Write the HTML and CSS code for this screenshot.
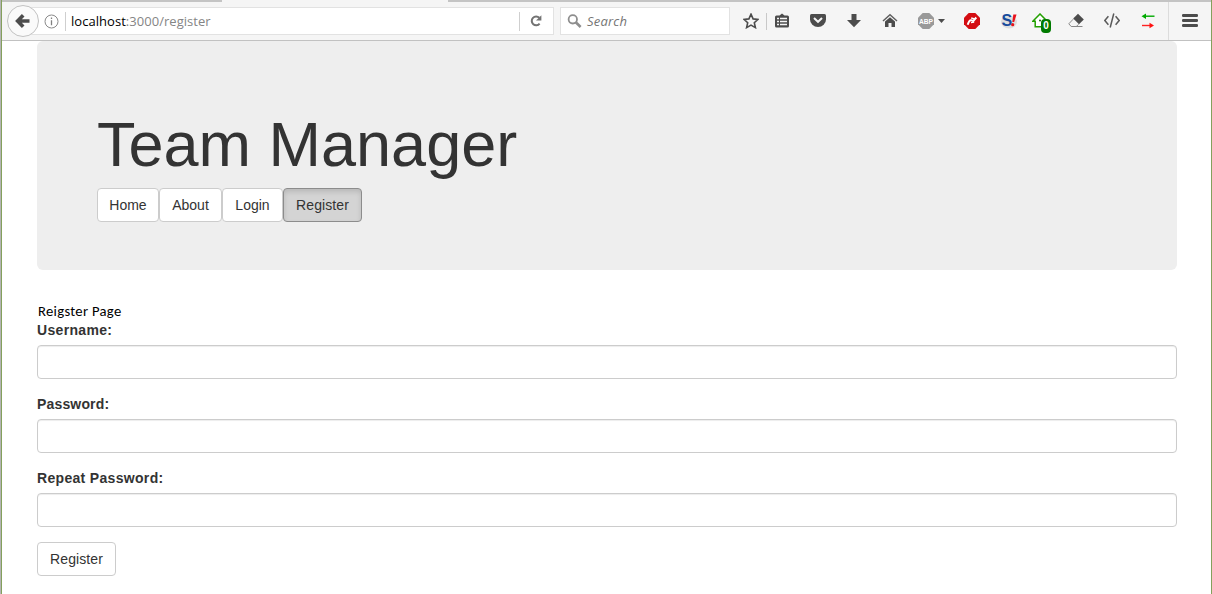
FILE: index.html
```html
<!DOCTYPE html>
<html lang="en">
<head>
<meta charset="utf-8">
<title>Team Manager</title>
<link rel="stylesheet" href="styles.css">
</head>
<body>
<div class="window">
  <div class="tabstrip"><span class="tab-active"></span></div>
  <header class="toolbar">
    <button class="back" aria-label="Back"><svg width="16" height="16" viewBox="0 0 16 16"><path d="M8.2 2.2 2.6 8 8.2 13.8M3.5 8H14.5" fill="none" stroke="#4c4c4c" stroke-width="3.6"/></svg></button>
    <div class="urlbar">
      <svg class="info" width="15" height="15" viewBox="0 0 15 15"><circle cx="7.5" cy="7.5" r="6.5" fill="none" stroke="#8a8a8a"/><path d="M7.5 3.5v1.6M7.5 6.3v5" stroke="#808080" stroke-width="1.3"/></svg>
      <span class="divider"></span>
      <span class="url"><span class="host">localhost</span>:3000/register</span>
      <span class="divider"></span>
      <svg class="reload" width="12" height="12" viewBox="0 0 12 12"><path d="M9.6 8.6A4.4 4.4 0 1 1 9.3 2.8" fill="none" stroke="#737373" stroke-width="2"/><path d="M11.4.2V5.6H6z" fill="#737373"/></svg>
    </div>
    <div class="searchbar">
      <svg width="15" height="15" viewBox="0 0 15 15"><circle cx="5.8" cy="5.3" r="4.2" fill="none" stroke="#8e8e8e" stroke-width="1.8"/><path d="M8.8 8.3 13.6 13" stroke="#8e8e8e" stroke-width="2.6"/></svg>
      <span class="search-label">Search</span>
    </div>
    <nav class="tools">
      <span class="tool"><svg viewBox="0 0 16 16"><path d="M8 1.2 10.1 5.9 15 6.4 11.3 9.7 12.4 14.6 8 12.1 3.6 14.6 4.7 9.7 1 6.4 5.9 5.9z" fill="none" stroke="#4c4c4c" stroke-width="1.6"/></svg></span>
      <span class="tool-divider"></span>
      <span class="tool"><svg viewBox="0 0 16 16"><path d="M2.5 2.5H5.5L8 .4 10.5 2.5H13.5Q15 2.5 15 4V13Q15 14.5 13.5 14.5H2.5Q1 14.5 1 13V4Q1 2.5 2.5 2.5Z" fill="#4c4c4c"/><path d="M3 5.5H5M6 5.5H13M3 8.5H5M6 8.5H13M3 11.5H5M6 11.5H13" stroke="#f5f5f5" stroke-width="1.6"/></svg></span>
      <span class="tool"><svg viewBox="0 0 16 16"><path d="M1.5 1H14.5Q16 1 16 2.5V6.5A8 7.5 0 0 1 0 6.5V2.5Q0 1 1.5 1Z" fill="#4c4c4c"/><path d="M4 5 8 8.8 12 5" fill="none" stroke="#f5f5f5" stroke-width="2"/></svg></span>
      <span class="tool"><svg viewBox="0 0 16 16"><path d="M5.5 1H10.5V7H15L8 14.3 1 7H5.5Z" fill="#4c4c4c"/></svg></span>
      <span class="tool"><svg viewBox="0 0 16 16"><path d="M1 8 8 1.8 15 8" fill="none" stroke="#606060" stroke-width="1.5"/><path d="M3 8.6 8 4.2 13 8.6V14H9.5V10H6.5V14H3Z" fill="#4c4c4c"/></svg></span>
      <span class="tool abp"><svg viewBox="0 0 16 16"><path d="M4.7 0H11.3L16 4.7V11.3L11.3 16H4.7L0 11.3V4.7Z" fill="#999"/><text x="8" y="11" class="abp-text" textLength="14" lengthAdjust="spacingAndGlyphs">ABP</text></svg><svg class="caret" viewBox="0 0 7 4"><path d="M0 0H7L3.5 4Z" fill="#4c4c4c"/></svg></span>
      <span class="tool flash"><svg viewBox="0 0 16 16"><path d="M4.7 0H11.3L16 4.7V11.3L11.3 16H4.7L0 11.3V4.7Z" fill="#d40d12"/><path d="M3.7 11.8C4.7 8.5 5.8 6.8 7.3 7.2L9.2 8 12.3 4.5" fill="none" stroke="#fff" stroke-width="2"/><path d="M7.2 5 10.6 5.9M7 9.6 10.2 9" fill="none" stroke="#fff" stroke-width="1.4"/></svg></span>
      <span class="tool s-tool"><svg viewBox="0 0 16 16"><ellipse cx="8" cy="9" rx="8" ry="6.5" fill="#dedede"/><text x="0.5" y="13.2" class="s-text">S</text><path d="M12.3 1.5H15.5L13.2 9H11.3Z" fill="#e8121b"/><circle cx="11.7" cy="11.7" r="1.6" fill="#e8121b"/></svg></span>
      <span class="tool"><svg viewBox="0 0 16 16"><path d="M.8 8.3 8 1 15.2 8.3H12.8V13.7H3.2V8.3Z" fill="#fff" stroke="#22a000" stroke-width="1.5"/><circle cx="8" cy="7.5" r="1" fill="#176b00"/></svg><span class="badge">0</span></span>
      <span class="tool"><svg viewBox="0 0 16 16"><path d="M10 .8 15.8 6.5 11 11.3 5.2 5.6Z" fill="#4c4c4c"/><path d="M5.2 6.2.8 10.8 3.2 13.5H14.5M10.5 11.3 8.3 13.5" fill="none" stroke="#888" stroke-width="1"/></svg></span>
      <span class="tool"><svg viewBox="0 0 16 16"><path d="M4.4 3.2.8 7.5 4.4 11.8M11.6 3.2 15.2 7.5 11.6 11.8M9.8.5 6.2 14.5" fill="none" stroke="#5a5a5a" stroke-width="1.5"/></svg></span>
      <span class="tool"><svg viewBox="0 0 16 16"><path d="M4 3.2H14.5" stroke="#0a0" stroke-width="1.4"/><path d="M1.5 3.2 6 .5V5.9Z" fill="#0a0"/><path d="M2 12.5H11" stroke="#f22" stroke-width="1.4"/><path d="M14 12.5 9.5 9.8V15.2Z" fill="#f11"/></svg></span>
      <span class="tool-divider tall"></span>
      <span class="tool"><svg viewBox="0 0 16 16"><path d="M1.2 2.5H14.8M1.2 7.5H14.8M1.2 12.5H14.8" stroke="#4c4c4c" stroke-width="2.8" stroke-linecap="round"/></svg></span>
    </nav>
  </header>
  <main class="container">
    <section class="jumbotron">
      <h1>Team Manager</h1>
      <nav class="links">
        <a class="btn home">Home</a><a class="btn about">About</a><a class="btn login">Login</a><a class="btn register active">Register</a>
      </nav>
    </section>
    <p class="caption">Reigster Page</p>
    <form>
      <div class="form-group"><label for="user">Username:</label><input id="user" type="text"></div>
      <div class="form-group"><label class="snug" for="pass">Password:</label><input id="pass" type="password"></div>
      <div class="form-group"><label for="repeat">Repeat Password:</label><input id="repeat" type="password"></div>
      <button class="btn register" type="button">Register</button>
    </form>
  </main>
</div>
</body>
</html>
```
FILE: styles.css
```css
* { box-sizing: border-box; }
body { margin: 0; background: #fff; color: #333; font: 14px/20px "Liberation Sans", Arial, sans-serif; }
.window { height: 594px; border-left: 1px solid #b4b4b4; border-right: 1px solid #84a05c; box-shadow: inset 1px 0 #84a05c; padding-left: 1px; overflow: hidden; }
.tabstrip { height: 2px; background: #c4c4c4; display: flex; }
.tab-active { margin-left: 220px; width: 226px; background: #f5f5f5; }
.toolbar { height: 39px; display: flex; align-items: center; background: #f5f5f5; border-bottom: 1px solid #c1c1c1; font-family: "Open Sans", "Noto Sans", sans-serif; }
.back { width: 32px; height: 32px; margin: 0 0 1px 5px; padding: 0; border: 1px solid #c2c2c2; border-radius: 50%; background: #fafafa; display: flex; align-items: center; justify-content: center; flex: none; z-index: 1; }
.urlbar { width: 523px; height: 28px; margin-left: -8px; padding-left: 12px; background: #fff; border: 1px solid #e2e2e2; display: flex; align-items: center; flex: none; }
.info { margin-right: 6px; }
.divider { width: 1px; height: 19px; background: #cfcfcf; }
.url { width: 453px; padding-left: 5px; font-size: 13px; letter-spacing: .04px; color: #858585; white-space: nowrap; }
.host { color: #000; }
.reload { margin-left: 10px; }
.searchbar { width: 170px; height: 28px; margin-left: 6px; padding-left: 7px; display: flex; align-items: center; gap: 4px; background: #fff; border: 1px solid #e2e2e2; flex: none; }
.searchbar svg { margin-left: -1px; margin-right: 1px; }
.search-label { font-size: 13px; font-style: italic; letter-spacing: .2px; color: #757575; }
.tools { display: flex; align-items: center; height: 38px; margin-left: 13px; }
.tool { position: relative; width: 16px; height: 16px; margin-right: 20px; flex: none; display: flex; }
.tool:first-child { margin-right: 7px; }
.tool svg { width: 16px; height: 16px; flex: none; display: block; }
.tool-divider { width: 1px; height: 17px; background: #c8c8c8; margin-right: 7px; }
.tool-divider.tall { height: 38px; background: #dcdcdc; margin: 0 13px 0 -8px; }
.abp { width: 26px; align-items: center; gap: 4px; }
.flash { margin-right: 21px; }
.s-tool { margin-right: 15px; }
.tool .caret { width: 7px; height: 4px; }
.abp-text { font: bold 7px "Liberation Sans", sans-serif; fill: #fff; text-anchor: middle; }
.s-text { font: bold 16px "Liberation Sans", sans-serif; fill: #174b9c; }
.badge { position: absolute; left: 9px; top: 6px; width: 10px; height: 14px; border-radius: 4px; background: #007a00; color: #fff; font: bold 10px/14px "Liberation Sans", sans-serif; text-align: center; }
.container { padding: 0 34px 0 35px; }
.jumbotron { height: 229px; padding: 68px 60px 0; background: #eee; border-radius: 6px; }
h1 { margin: 0 0 9px; font-size: 63px; line-height: 70px; font-weight: 500; }
.links { display: flex; }
.btn { display: inline-block; height: 34px; padding: 6px 0; border: 1px solid #ccc; border-radius: 4px; background: #fff; color: #333; text-align: center; font: 14px/20px "Liberation Sans", Arial, sans-serif; }
.home { width: 62px; }
.about { width: 63px; }
.login { width: 61px; }
.register { width: 79px; letter-spacing: .1px; }
.active { background: #d4d4d4; border-color: #8c8c8c; box-shadow: inset 0 3px 5px rgba(0,0,0,.125); }
.caption { margin: 33px 0 0 1px; height: 17px; color: #000; font: 14.67px/17px Carlito, Calibri, Lato, sans-serif; letter-spacing: .3px; }
.form-group { margin-bottom: 15px; }
label { display: block; margin-bottom: 5px; font-weight: bold; letter-spacing: .32px; }
.snug { letter-spacing: .16px; }
input { display: block; width: 100%; height: 34px; border: 1px solid #ccc; border-radius: 4px; box-shadow: inset 0 1px 1px rgba(0,0,0,.075); }
```
